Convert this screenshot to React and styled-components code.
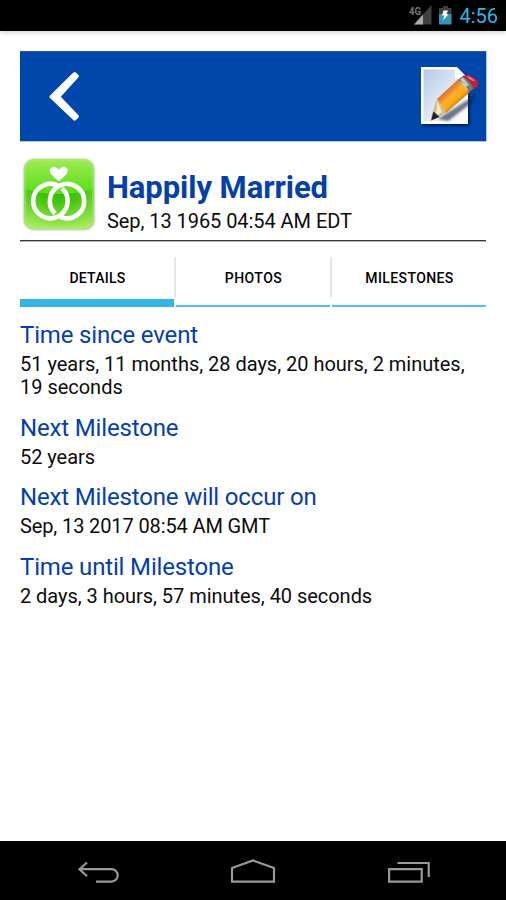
import React from 'react';
import styled, { createGlobalStyle } from 'styled-components';

const Global = createGlobalStyle`
  * { box-sizing: border-box; }
  body { margin: 0; background: #fff; font-family: Roboto, sans-serif; color: #0c0c0c; }
`;
const Screen = styled.div`
  width: 506px;
  height: 900px;
  display: flex;
  flex-direction: column;
  overflow: hidden;
`;
const StatusBar = styled.header`
  height: 31px;
  flex: none;
  background: #000;
  box-shadow: 0 1px 5px rgba(0, 0, 0, 0.22);
  display: flex;
  align-items: center;
  justify-content: flex-end;
  padding-right: 8px;
`;
const StatusIcons = styled.svg`
  display: block;
  width: 46px;
  height: 31px;
  margin-right: 5px;
`;
const Clock = styled.span`
  color: #33b5e5;
  font-size: 20px;
  line-height: 31px;
  padding-top: 2px;
`;
const Main = styled.main`
  flex: 1;
  padding: 20px 20px 0;
`;
const AppBar = styled.div`
  height: 91px;
  width: 467px;
  background: #0047ab;
  border: solid #b9c3e2;
  border-width: 0 1px 1px 0;
  box-shadow: inset 0 1px 0 #2b58b0;
  display: flex;
  justify-content: space-between;
`;
const BarButton = styled.button`
  border: 0;
  padding: 0;
  background: none;
  width: 90px;
  height: 90px;
  svg { display: block; }
`;
const EventHeader = styled.section`
  display: flex;
  height: 99px;
  padding: 14px 0 0 1px;
  border-bottom: 1px solid #383838;
  box-shadow: 0 1px 0 #b4b4b4;
`;
const EventIcon = styled.svg`
  display: block;
  width: 76px;
  height: 76px;
`;
const EventText = styled.div`
  padding: 14px 0 0 10px;
`;
const Title = styled.h1`
  margin: 0;
  font-size: 31px;
  line-height: 36px;
  color: #0540a8;
  white-space: nowrap;
  letter-spacing: -0.06px;
`;
const Tabs = styled.nav`
  display: grid;
  grid-template-columns: repeat(3, 1fr);
  height: 50px;
  margin-top: 16px;
  width: 468px;
`;
const Tab = styled.button`
  display: flex;
  flex-direction: column;
  border: 0;
  padding: 0 2px 0 0;
  background: none;
  color: #000;
`;
const TabLabel = styled.span`
  align-self: stretch;
  height: 40px;
  font: 500 14px/42px Roboto, sans-serif;
  letter-spacing: ${p => p.$track}px;
  margin-right: -2px;
  padding-left: 1px;
  border-right: 2px solid ${p => (p.$last ? 'transparent' : '#e6e6e6')};
`;
const TabLine = styled.span`
  align-self: stretch;
  margin-top: auto;
  height: ${p => (p.$active ? 8 : 2)}px;
  background: ${p => (p.$active ? '#33b5e5' : '#52bfe8')};
`;
const Details = styled.section`
  display: flex;
  flex-direction: column;
  gap: 14px;
  padding-top: 14px;
`;
const FieldName = styled.h2`
  margin: 0;
  font-size: 24px;
  font-weight: 400;
  line-height: 28px;
  color: #0540a8;
  letter-spacing: -0.16px;
`;
const FieldValue = styled.p`
  margin: 0;
  padding-top: 4px;
  font-size: 20px;
  line-height: 23.4px;
  color: #0c0c0c;
  white-space: pre-line;
  letter-spacing: ${p => p.$track ?? -0.04}px;
`;
const NavBar = styled.footer`
  height: 59px;
  flex: none;
  background: #000;
  display: grid;
  grid-template-columns: repeat(3, 155px);
  justify-content: center;
`;
const NavButton = styled.button`
  border: 0;
  padding: 0;
  background: none;
  svg { display: block; }
`;

const BackChevron = () => (
  <svg width="90" height="90" viewBox="20 51 90 90" fill="none">
    <path d="M74.300 72.300Q75 71.700 75.800 72.400L78.600 75.300Q79.300 76.300 78.500 77.200L60.800 96.700L78.500 115.200Q79.300 116.300 78.600 117.300L75.800 120.300Q74.600 121 73.500 120.300L50 98Q48.800 96.700 50 95.400L72.800 72.900Z" fill="#fff" />
  </svg>
);

const EditIcon = () => (
  <svg width="90" height="90" viewBox="396 51 90 90">
    <defs>
      <linearGradient id="paper" x1="0" y1="0" x2="1" y2="1">
        <stop offset="0" stopColor="#b3c9e6" /><stop offset=".55" stopColor="#e3ebf6" /><stop offset="1" stopColor="#fff" />
      </linearGradient>
      <linearGradient id="wood" x1="444" y1="92" x2="457" y2="106" gradientUnits="userSpaceOnUse">
        <stop offset="0" stopColor="#d8762c" /><stop offset=".25" stopColor="#f08e33" /><stop offset=".4" stopColor="#ffb02a" /><stop offset=".7" stopColor="#fbac17" /><stop offset="1" stopColor="#b9700e" />
      </linearGradient>
      <filter id="soft"><feGaussianBlur stdDeviation="1.200" /></filter>
    </defs>
    <path d="M423 69H458L470 80V126H423Z" fill="#001b55" opacity=".9" filter="url(#soft)" />
    <path d="M421 67H457L468 78V124H421Z" fill="#fff" />
    <path d="M423.500 69.500H454L466 80V121.500H423.500Z" fill="url(#paper)" />
    <path d="M455 67.500L467 79H455Z" fill="#fff" />
    <path d="M438 119L472 97L479 88L473 102L448 121Z" fill="#14223f" opacity=".6" filter="url(#soft)" />
    <path d="M437 99L458 79.500L470 92L446 113Z" fill="url(#wood)" />
    <path d="M437 99L446 113L433 120L431 117Z" fill="#cdbd91" />
    <path d="M437.500 101L442 112L436 116Z" fill="#f4e8c8" />
    <path d="M433.500 111.500L439.500 117L431 120.500Z" fill="#26221f" />
    <path d="M457.500 80L464 75L475 87L469 92.500Q466 84 457.500 80Z" fill="#74797e" />
    <path d="M460 79.500L463 77.500L469 85L466 87Z" fill="#c4c7ca" />
    <path d="M463 77Q466 74 469.500 75L476.500 79.500Q480 83.500 477 87.500L473.500 89.500Q471 81 463 77Z" fill="#b82338" />
    <path d="M466.500 76.500Q470 75.500 475 81Q472 82 466.500 76.500Z" fill="#ea7584" />
  </svg>
);

const RingsIcon = () => (
  <EventIcon viewBox="21 156 76 76">
    <defs>
      <linearGradient id="green" x1="0" y1="0" x2="0" y2="1">
        <stop offset="0" stopColor="#a0ec55" /><stop offset=".45" stopColor="#5fde1c" />
      </linearGradient>
      <radialGradient id="glow" cx=".5" cy="0" r="1">
        <stop offset="0" stopColor="#2bb500" /><stop offset=".35" stopColor="#46c60c" /><stop offset="1" stopColor="#a6ec5e" />
      </radialGradient>
      <clipPath id="tile"><rect x="24" y="159" width="70" height="70" rx="10" /></clipPath>
      <filter id="tileShadow"><feGaussianBlur stdDeviation=".8" /></filter>
    </defs>
    <rect x="23.800" y="159.200" width="70.600" height="70.600" rx="10" fill="#57704a" opacity=".55" filter="url(#tileShadow)" />
    <g clipPath="url(#tile)">
      <rect x="24" y="159" width="70" height="70" fill="url(#green)" />
      <path d="M24 189Q59 199 94 189V229H24Z" fill="url(#glow)" />
    </g>
    <rect x="25" y="160" width="68" height="68" rx="9" fill="none" stroke="#b0ec7e" strokeOpacity=".6" strokeWidth="1.500" />
    <g fill="none" stroke="#fff" strokeWidth="4.600">
      <path d="M62.100 188.400A17.200 17.200 0 1 1 57.400 185.300" />
      <path d="M55.200 213.600A17.200 17.200 0 1 1 60.200 216.900" />
    </g>
    <path d="M58.700 181.500L51.300 174.500C48 170 51.500 166 55 167Q57.500 167.500 58.800 170Q60 167.500 62.300 167C66.500 166 69.500 170 66.200 174.500Z" fill="#fff" />
  </EventIcon>
);

const tabs = [
  { label: 'DETAILS', track: 0.25, active: true },
  { label: 'PHOTOS', track: 0.45 },
  { label: 'MILESTONES', track: 0.4 },
];

const fields = [
  { name: 'Time since event', value: '51 years, 11 months, 28 days, 20 hours, 2 minutes,\n19 seconds', track: -0.02 },
  { name: 'Next Milestone', value: '52 years' },
  { name: 'Next Milestone will occur on', value: 'Sep, 13 2017 08:54 AM GMT', track: -0.12 },
  { name: 'Time until Milestone', value: '2 days, 3 hours, 57 minutes, 40 seconds' },
];

export default function App() {
  return (
    <Screen>
      <Global />
      <StatusBar>
        <StatusIcons viewBox="408 0 46 31">
          <path d="M414 24.500L431.500 5V24.500Z" fill="#404040" />
          <path d="M414 24.500L423 14.500V24.500Z" fill="#aaa" />
          <rect x="408" y="4" width="13.500" height="12" fill="#000" />
          <text x="409" y="14.500" fontFamily="Roboto, sans-serif" fontWeight="700" fontSize="11.500" textLength="12" lengthAdjust="spacingAndGlyphs" fill="#777">4G</text>
          <path d="M439 8H443V6H448V8H451.500V14H439Z" fill="#404040" />
          <path d="M439 14H451.500V24.500H439Z" fill="#3497b8" />
          <path d="M443.500 10.500H448L446.500 14H448.500L443 20.500L444.500 15.500H442Z" fill="#fff" />
        </StatusIcons>
        <Clock>4:56</Clock>
      </StatusBar>
      <Main>
        <AppBar>
          <BarButton aria-label="Back"><BackChevron /></BarButton>
          <BarButton aria-label="Edit"><EditIcon /></BarButton>
        </AppBar>
        <EventHeader>
          <RingsIcon />
          <EventText>
            <Title>Happily Married</Title>
            <FieldValue $track={-0.06}>Sep, 13 1965 04:54 AM EDT</FieldValue>
          </EventText>
        </EventHeader>
        <Tabs>
          {tabs.map((t, i) => (
            <Tab key={t.label}>
              <TabLabel $track={t.track} $last={i === tabs.length - 1}>{t.label}</TabLabel>
              <TabLine $active={t.active} />
            </Tab>
          ))}
        </Tabs>
        <Details>
          {fields.map(f => (
            <div key={f.name}>
              <FieldName>{f.name}</FieldName>
              <FieldValue $track={f.track}>{f.value}</FieldValue>
            </div>
          ))}
        </Details>
      </Main>
      <NavBar>
        <NavButton aria-label="Back">
          <svg width="155" height="59" viewBox="21.500 841 155 59" fill="none" stroke="#999" strokeWidth="2.200">
            <path d="M79.500 869.200H112A6.200 6.200 0 0 1 112 881.600H96.500M87.500 862.500L80 869.200L87.500 876.300" />
          </svg>
        </NavButton>
        <NavButton aria-label="Home">
          <svg width="155" height="59" viewBox="176 841 155 59" fill="none" stroke="#999" strokeWidth="2.200">
            <path d="M232 881.600V868L253 860.500L274 868V881.600Z" />
          </svg>
        </NavButton>
        <NavButton aria-label="Recent apps">
          <svg width="155" height="59" viewBox="331 841 155 59" fill="none" stroke="#999" strokeWidth="2.200">
            <path d="M389.100 869.200H421.700V881.600H389.100ZM397.500 863H428.700V877" />
          </svg>
        </NavButton>
      </NavBar>
    </Screen>
  );
}
